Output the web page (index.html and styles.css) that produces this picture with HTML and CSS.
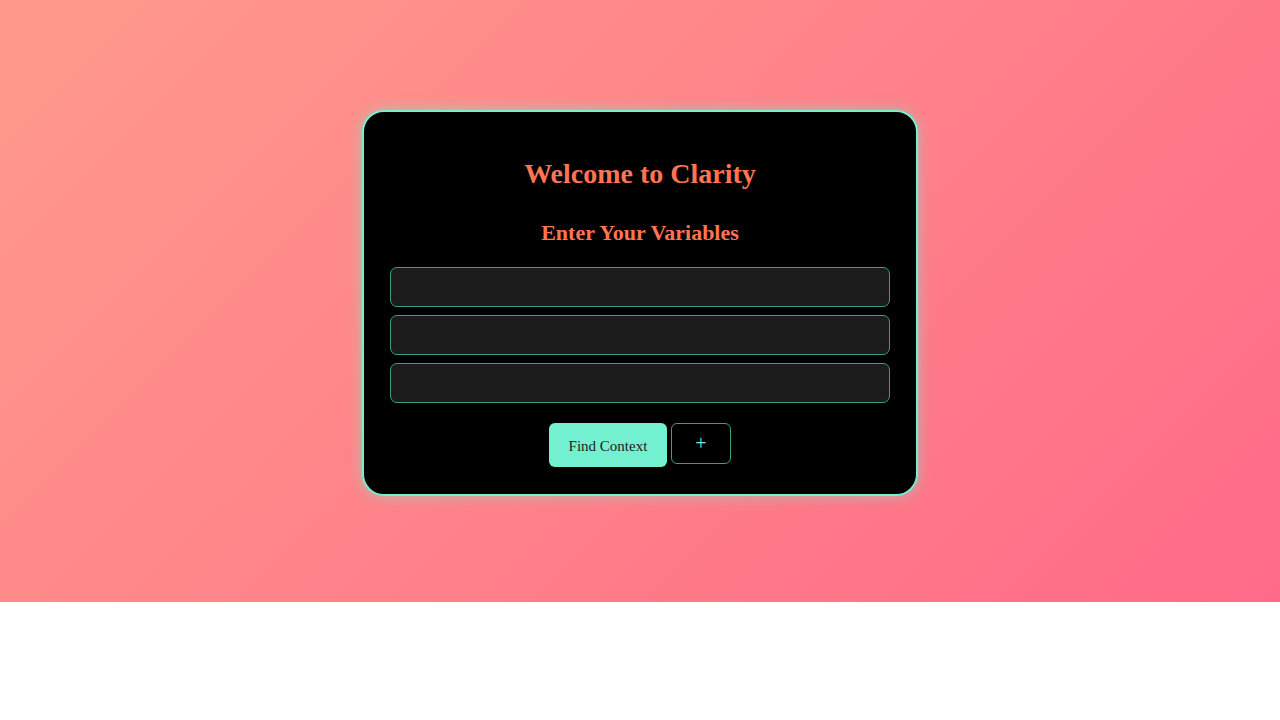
FILE: index.html
```html
<!DOCTYPE html>
<html lang="en">
<head>
<meta charset="utf-8">
<title>Clarity</title>
<link rel="stylesheet" href="styles.css">
</head>
<body>
<main class="page">
  <section class="card">
    <h1 class="title">Welcome to Clarity</h1>
    <h2 class="subtitle">Enter Your Variables</h2>
    <div class="fields">
      <input class="field" type="text">
      <input class="field" type="text">
      <input class="field" type="text">
    </div>
    <div class="actions">
      <button class="btn-primary">Find Context</button>
      <button class="btn-add">+</button>
    </div>
  </section>
</main>
</body>
</html>
```
FILE: styles.css
```css
html, body {
  margin: 0;
  padding: 0;
  background: #ffffff;
}
body {
  font-family: "Liberation Serif", "DejaVu Serif", serif;
}
.page {
  box-sizing: border-box;
  height: 602px;
  padding-top: 4px;
  background: linear-gradient(135deg, #ff9a8b 0%, #ff6a88 100%);
  display: flex;
  align-items: center;
  justify-content: center;
}
.card {
  box-sizing: border-box;
  width: 556px;
  height: 386px;
  background: #000000;
  border: 2px solid #72f0d0;
  border-radius: 22px;
  box-shadow: 0 0 14px rgba(114, 240, 208, 0.55);
  padding: 44px 26px 0;
  display: flex;
  flex-direction: column;
  align-items: center;
}
.title {
  margin: 0;
  color: #ff7452;
  font-size: 28px;
  font-weight: 700;
  line-height: 36px;
}
.subtitle {
  margin: 27px 0 0;
  color: #ff7452;
  font-size: 22px;
  font-weight: 700;
  line-height: 28px;
}
.fields {
  margin-top: 20px;
  width: 100%;
  display: flex;
  flex-direction: column;
  gap: 8px;
}
.field {
  box-sizing: border-box;
  width: 100%;
  height: 40px;
  background: #1b1b1b;
  border: 1px solid #3e9c83;
  border-radius: 7px;
  outline: none;
  color: #ffffff;
  font-family: inherit;
  font-size: 16px;
  padding: 0 12px;
}
.actions {
  margin-top: 20px;
  display: flex;
  align-items: flex-start;
  gap: 4px;
}
.btn-primary {
  box-sizing: border-box;
  width: 118px;
  height: 44px;
  background: #72f0d0;
  border: none;
  border-radius: 6px;
  color: #1c1c1c;
  font-family: inherit;
  font-size: 15px;
  padding: 2px 0 0;
}
.btn-add {
  box-sizing: border-box;
  width: 60px;
  height: 41px;
  background: #000000;
  border: 1px solid #3e9c83;
  border-radius: 6px;
  color: #72f0d0;
  font-family: inherit;
  font-size: 20px;
  font-weight: 300;
  padding: 0;
}
```
